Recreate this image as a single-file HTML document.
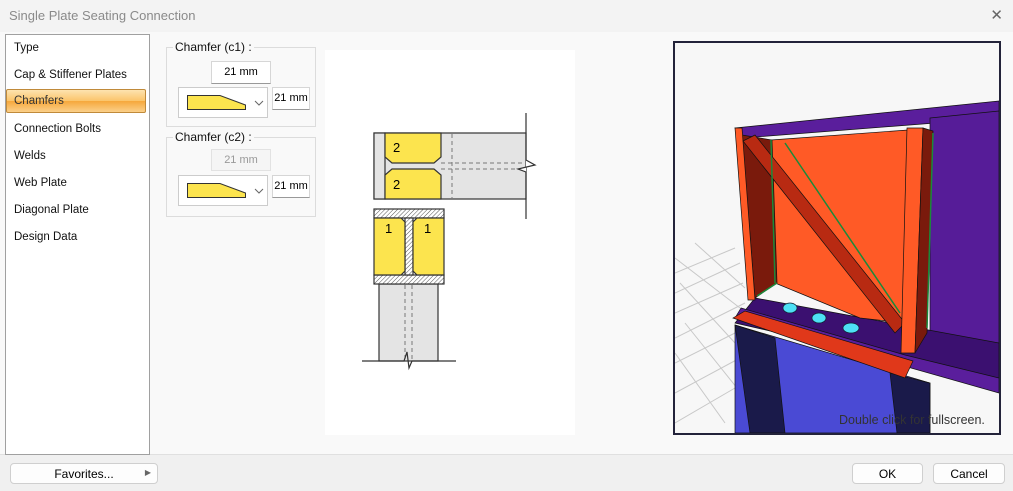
<!DOCTYPE html>
<html><head><meta charset="utf-8"><style>
*{margin:0;padding:0;box-sizing:border-box}
body{width:1013px;height:491px;overflow:hidden;background:#f0f0f0;font-family:"Liberation Sans",sans-serif;font-size:12px;color:#000;position:relative}
.abs{position:absolute}
.title{left:0;top:0;width:1013px;height:32px;background:#f3f3f3;color:#8a8a8a;font-size:13px;padding:8px 0 0 9px}
.close{right:10px;top:6px;font-size:15px;color:#666}
.main{left:0;top:32px;width:1013px;height:423px;background:#f9f9f9;border-bottom:1px solid #e0e0e0}
.nav{left:5px;top:34px;width:145px;height:421px;background:#fff;border:1px solid #a0a0a0}
.nav div{position:absolute;left:8px;font-size:11.5px;color:#111}
.sel{left:6px;top:89px;width:140px;height:24px;border:1px solid #c08a3a;border-radius:2px;background:linear-gradient(#fde3b0,#fbc46a 50%,#f6a83c 51%,#fbd08a)}
.grp{border:1px solid #dcdcdc}
.lbl{background:#f9f9f9;padding:0 2px;font-size:12px;color:#111}
.inp{background:#fff;border:1px solid #d6d6d6;border-bottom-color:#999;font-size:11px;text-align:center;padding-top:4px}
.btn{background:#fdfdfd;border:1px solid #cfcfcf;border-radius:4px;font-size:12px;text-align:center;padding-top:3px}
</style></head><body>
<div class="abs title">Single Plate Seating Connection</div>
<div class="abs close">✕</div>
<div class="abs main"></div>
<div class="abs nav">
<div style="top:7px">Type</div>
<div style="top:34px">Cap &amp; Stiffener Plates</div>
<div style="top:88px">Connection Bolts</div>
<div style="top:115px">Welds</div>
<div style="top:142px">Web Plate</div>
<div style="top:169px">Diagonal Plate</div>
<div style="top:196px">Design Data</div>
</div>
<div class="abs sel"></div>
<div class="abs" style="left:14px;top:95px;color:#333;font-size:11.5px">Chamfers</div>

<div class="abs grp" style="left:166px;top:47px;width:150px;height:80px"></div>
<div class="abs lbl" style="left:173px;top:40px">Chamfer (c1) :</div>
<div class="abs inp" style="left:211px;top:61px;width:60px;height:23px">21 mm</div>
<div class="abs inp" style="left:178px;top:87px;width:90px;height:31px;border-color:#ccc"></div>
<div class="abs inp" style="left:272px;top:87px;width:38px;height:23px">21 mm</div>
<div class="abs grp" style="left:166px;top:137px;width:150px;height:80px"></div>
<div class="abs lbl" style="left:173px;top:130px">Chamfer (c2) :</div>
<div class="abs inp" style="left:211px;top:149px;width:60px;height:22px;background:#f5f5f5;color:#999;border-color:#e2e2e2">21 mm</div>
<div class="abs inp" style="left:178px;top:175px;width:90px;height:31px;border-color:#ccc"></div>
<div class="abs inp" style="left:272px;top:175px;width:38px;height:23px">21 mm</div>
<svg class="abs" style="left:0;top:0" width="1013" height="491">
<g stroke="#333" stroke-width="1" fill="#fce44e">
<polygon points="187.5,95.5 220,95.5 245.5,105 245.5,109.5 187.5,109.5"/>
<polygon points="187.5,183.5 220,183.5 245.5,193 245.5,197.5 187.5,197.5"/>
</g>
<g stroke="#666" fill="none"><polyline points="255,101 259,105 263,101"/><polyline points="255,189 259,193 263,189"/></g>
</svg>

<div class="abs" style="left:325px;top:50px;width:250px;height:385px;background:#fff"></div>
<svg class="abs" style="left:0;top:0" width="1013" height="491">
<defs><pattern id="h" width="3" height="3" patternUnits="userSpaceOnUse" patternTransform="rotate(45)"><rect width="3" height="3" fill="#fff"/><line x1="0" y1="0" x2="0" y2="3" stroke="#555" stroke-width="1"/></pattern></defs>
<g stroke="#333" stroke-width="1.2">
<rect x="374" y="133" width="152" height="66" fill="#e4e4e4"/>
<rect x="374" y="133" width="11" height="66" fill="#e4e4e4"/>
<polygon points="385,133 441,133 441,157 434,163 392,163 385,157" fill="#fce44e"/>
<polygon points="392,169 434,169 441,175 441,199 385,199 385,175" fill="#fce44e"/>
</g>
<g stroke="#777" stroke-dasharray="4,3" fill="none"><line x1="452" y1="134" x2="452" y2="198"/><line x1="441" y1="163" x2="522" y2="163"/><line x1="441" y1="169" x2="515" y2="169"/></g>
<polyline points="526,113 526,160 535,165 518,169 526,172 526,219" fill="#fff" stroke="#333" stroke-width="1.2"/>
<text x="393" y="152" font-size="13" font-family="Liberation Sans">2</text>
<text x="393" y="189" font-size="13" font-family="Liberation Sans">2</text>
<g stroke="#333" stroke-width="1.2">
<rect x="379" y="284" width="59" height="77" fill="#e4e4e4"/>
<rect x="374" y="209" width="70" height="9" fill="url(#h)"/>
<rect x="374" y="275" width="70" height="9" fill="url(#h)"/>
<rect x="405" y="218" width="8" height="57" fill="url(#h)"/>
<polygon points="374,218 401,218 405,222 405,271 401,275 374,275" fill="#fce44e"/>
<polygon points="417,218 444,218 444,275 417,275 413,271 413,222" fill="#fce44e"/>
</g>
<g stroke="#777" stroke-dasharray="4,3"><line x1="405" y1="285" x2="405" y2="360"/><line x1="412" y1="285" x2="412" y2="360"/></g>
<polyline points="362,361 404,361 407,352 409,368 412,361 456,361" fill="none" stroke="#333" stroke-width="1.2"/>
<text x="385" y="233" font-size="13" font-family="Liberation Sans">1</text>
<text x="424" y="233" font-size="13" font-family="Liberation Sans">1</text>
</svg>

<div class="abs" style="left:673px;top:41px;width:328px;height:394px;background:#f7f7f7;border:2px solid #23233a"></div>
<svg class="abs" style="left:675px;top:43px" width="324" height="390">
<g stroke="#c8c8c8" fill="none">
<path d="M0,230 L60,205 M0,250 L65,220 M0,270 L68,240 M0,295 L70,260 M0,320 L70,285 M0,350 L65,315 M0,380 L60,345"/>
<path d="M5,240 L60,300 M0,215 L65,265 M20,200 L70,245 M10,280 L62,345 M0,310 L50,380"/>
</g>
<g stroke="#111" stroke-width="0.7">
<polygon points="60,85 324,58 324,75 68,95" fill="#5a1e9c"/>
<polygon points="255,75 324,68 324,340 255,320" fill="#561c98"/>
<polygon points="80,255 324,300 324,340 60,280" fill="#3b1070"/>
<polygon points="66,265 230,312 324,335 324,350 60,275" fill="#5a1e9c"/>
<polygon points="96,97 233,87 230,280 185,275 100,240" fill="#ff5a26"/>
<polygon points="67,92 97,97 102,240 80,255" fill="#7a1a0c"/>
<polygon points="60,85 67,85 80,257 73,257" fill="#ff5a26"/>
<polygon points="68,98 80,92 230,280 220,290" fill="#b82a12"/>
<polygon points="232,85 248,85 240,310 226,310" fill="#ff5a26"/>
<polygon points="248,85 258,88 252,290 240,310" fill="#7a1a0c"/>
<polygon points="60,282 255,340 255,390 60,390" fill="#4a4ad4"/>
<polygon points="60,282 100,295 110,390 75,390" fill="#1a1a4a"/>
<polygon points="215,330 255,340 255,390 222,390" fill="#1a1a4a"/>
<polygon points="58,275 70,268 238,318 230,335" fill="#e0381a"/>
</g>
<g stroke="#1a8a3a" stroke-width="1.5" fill="none"><path d="M82,253 L102,240 M96,97 L100,240 M258,90 L252,285 M110,100 L225,270"/></g>
<g fill="#4ee0f5" stroke="#123" stroke-width="0.7"><ellipse cx="115" cy="265" rx="7" ry="5"/><ellipse cx="144" cy="275" rx="7" ry="5"/><ellipse cx="176" cy="285" rx="8" ry="5"/></g>
<text x="164" y="381" font-size="12.5" fill="#333" font-family="Liberation Sans">Double click for fullscreen.</text>
</svg>

<div class="abs btn" style="left:10px;top:463px;width:148px;height:21px">Favorites...<span style="position:absolute;right:6px;top:4px;font-size:8px;color:#666">▶</span></div>
<div class="abs btn" style="left:852px;top:463px;width:71px;height:21px">OK</div>
<div class="abs btn" style="left:933px;top:463px;width:72px;height:21px">Cancel</div>
</body></html>
